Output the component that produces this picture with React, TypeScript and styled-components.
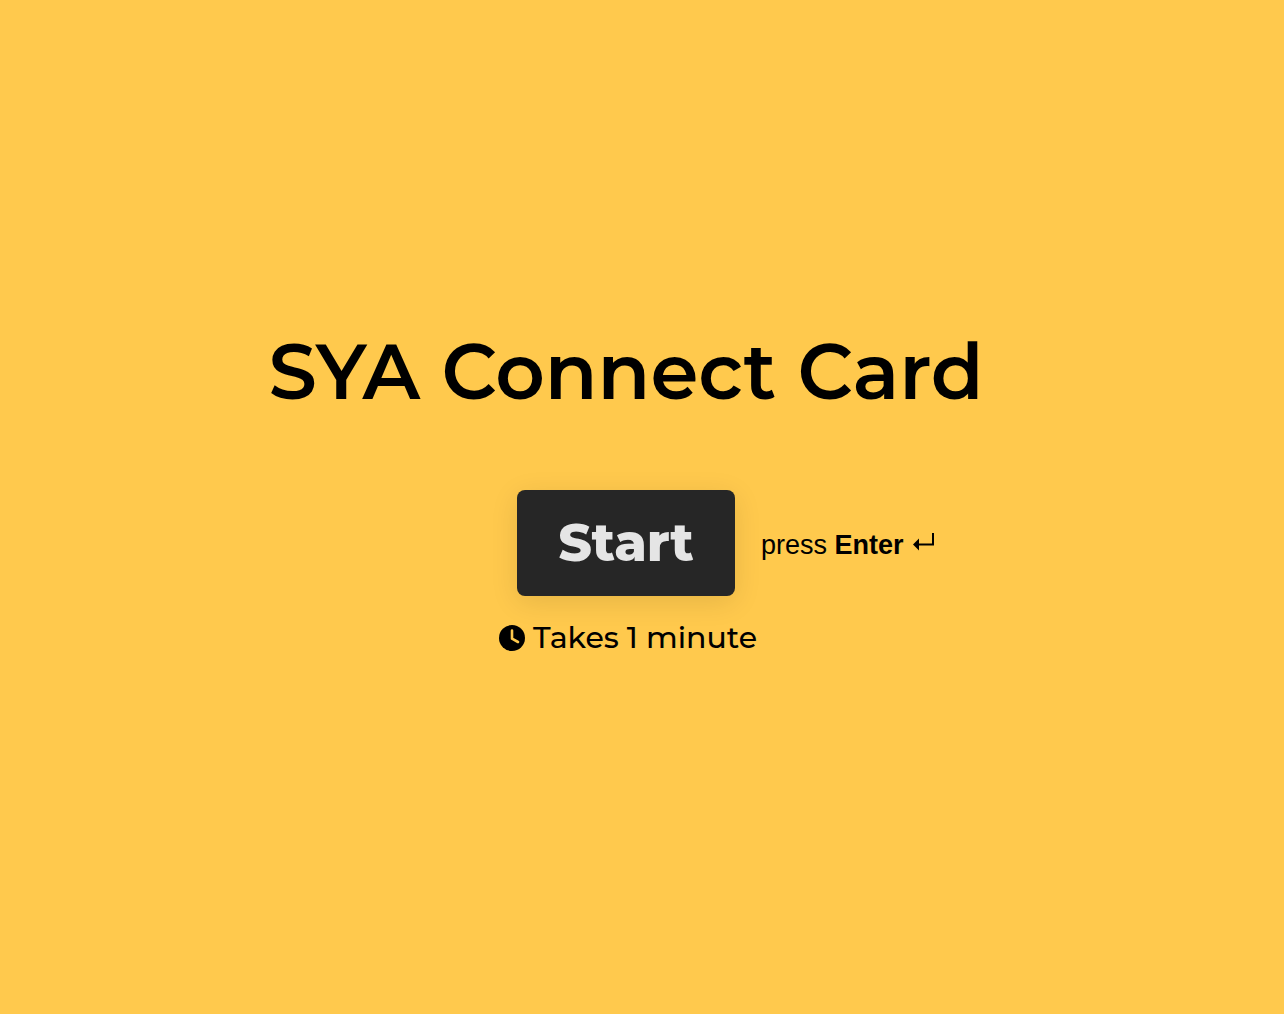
import React from "react";
import styled, { createGlobalStyle } from "styled-components";

const GlobalStyle = createGlobalStyle`
  * { box-sizing: border-box; }
  body { margin: 0; background: #ffc94d; color: #000; }
`;

const Screen = styled.main`
  min-height: 100vh;
  padding: 0 32px 36px 0;
  display: flex;
  flex-direction: column;
  align-items: center;
  justify-content: center;
  font-family: Montserrat, Lato, sans-serif;
`;

const Title = styled.h1`
  margin: 0 0 70px;
  font-size: 77px;
  line-height: 98px;
  font-weight: 600;
  text-align: center;
`;

const Actions = styled.div`
  width: 100%;
  display: grid;
  grid-template-columns: 1fr auto 1fr;
  align-items: center;
  column-gap: 26px;
`;

const StartButton = styled.button`
  grid-column: 2;
  padding: 20px 41px;
  border: 0;
  border-radius: 8px;
  background: #262626;
  color: #e5e5e5;
  box-shadow: 0 6px 28px rgba(0, 0, 0, 0.1);
  font-family: Montserrat, "Open Sans", sans-serif;
  font-size: 52px;
  line-height: 66px;
  font-weight: 800;
  cursor: pointer;
`;

const Hint = styled.div`
  display: flex;
  align-items: flex-start;
  gap: 9px;
  padding-top: 4px;
  font-family: "Liberation Sans", Arial, sans-serif;
  font-size: 27px;
  line-height: 32px;
`;

const Duration = styled.p`
  margin: 24px 0 0;
  padding-left: 4px;
  display: flex;
  align-items: center;
  gap: 8px;
  font-size: 30px;
  line-height: 36px;
  font-weight: 500;
`;

const ClockIcon = () => (
  <svg width="26" height="26" viewBox="0 0 26 26" aria-hidden="true">
    <circle cx="13" cy="13" r="13" />
    <path d="M13 5.5v8.2l6 3.3" fill="none" stroke="#ffc94d" strokeWidth="2.6" strokeLinecap="round" strokeLinejoin="round" />
  </svg>
);

const EnterIcon = () => (
  <svg width="24" height="24" viewBox="0 0 24 24" aria-hidden="true">
    <path d="M21 4v11.5H6" fill="none" stroke="#000" strokeWidth="2" />
    <path d="M1 15.5l6-6v12z" />
  </svg>
);

export default function App() {
  return (
    <>
      <GlobalStyle />
      <Screen>
        <Title>SYA Connect Card</Title>
        <Actions>
          <StartButton type="button">Start</StartButton>
          <Hint>
            <span>press <strong>Enter</strong></span>
            <EnterIcon />
          </Hint>
        </Actions>
        <Duration><ClockIcon />Takes 1 minute</Duration>
      </Screen>
    </>
  );
}
